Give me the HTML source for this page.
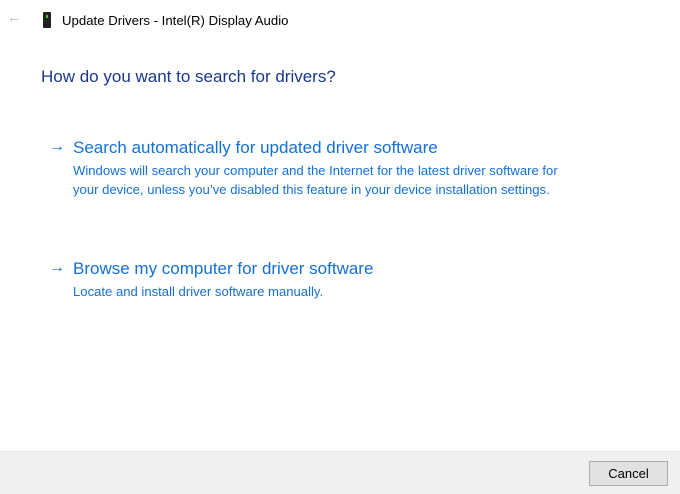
<!DOCTYPE html>
<html><head><style>
body{margin:0;width:680px;height:493px;background:#fff;font-family:"Liberation Sans",sans-serif;position:relative;overflow:hidden}
.a{position:absolute;white-space:nowrap}
</style></head><body>
<div class="a" style="left:7px;top:9px;color:#b0b0b0;font-size:14px">&#8592;</div>
<div class="a" style="left:43px;top:12px;width:8px;height:16px;background:#222;border-radius:1px"><div style="position:absolute;left:3px;top:3px;width:2px;height:3px;background:#3c3"></div></div>
<div class="a" style="left:62px;top:13px;font-size:13.2px;color:#000">Update Drivers - Intel(R) Display Audio</div>
<div class="a" style="left:41px;top:67px;font-size:17px;color:#1a3790">How do you want to search for drivers?</div>
<div class="a" style="left:49px;top:138px;font-size:16px;color:#1470d6">&#8594;</div>
<div class="a" style="left:73px;top:138px;font-size:17px;color:#1470d6">Search automatically for updated driver software</div>
<div class="a" style="left:73px;top:162px;font-size:13.1px;color:#1470d6;line-height:18.5px">Windows will search your computer and the Internet for the latest driver software for<br>your device, unless you’ve disabled this feature in your device installation settings.</div>
<div class="a" style="left:49px;top:259px;font-size:16px;color:#1470d6">&#8594;</div>
<div class="a" style="left:73px;top:259px;font-size:17px;color:#1470d6">Browse my computer for driver software</div>
<div class="a" style="left:73px;top:284px;font-size:13.1px;color:#1470d6">Locate and install driver software manually.</div>
<div class="a" style="left:0;top:451px;width:680px;height:42px;background:#f0f0f0;border-top:1px solid #e8e8e8"></div>
<div class="a" style="left:589px;top:461px;width:77px;height:23px;background:#e1e1e1;border:1px solid #adadad;font-size:13px;text-align:center;line-height:23px;color:#000">Cancel</div>
</body></html>
